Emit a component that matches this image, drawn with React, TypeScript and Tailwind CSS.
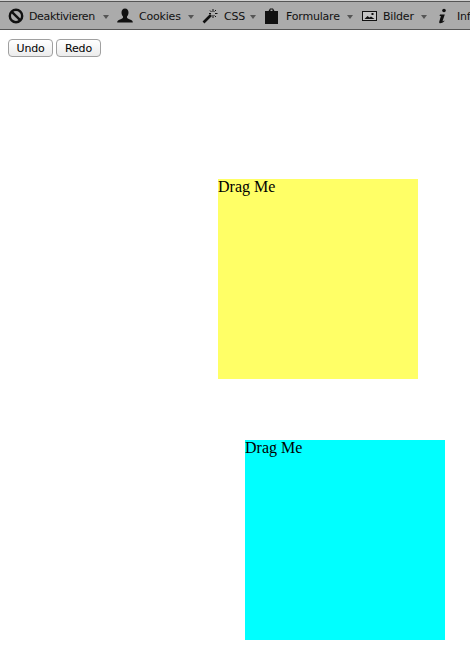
import type { ReactNode } from "react";

function Ban() {
  return (
    <svg width="16" height="16" viewBox="0 0 16 16" fill="none" stroke="#111" strokeWidth="2.4">
      <circle cx="8" cy="8" r="6.200" />
      <line x1="3.800" y1="3.800" x2="12.200" y2="12.200" />
    </svg>
  );
}

function Person() {
  return (
    <svg width="16" height="16" viewBox="0 0 16 16" fill="#111">
      <path d="M8 .5c2.300 0 3.500 1.700 3.500 4 0 1.700-.6 3.100-1.500 3.900v1.100c0 .9 1.300 1.300 3 1.900 1.500.5 2.800 1.100 2.800 3.100H.2c0-2 1.300-2.600 2.800-3.100 1.700-.6 3-1 3-1.900V8.400C5.100 7.600 4.500 6.200 4.500 4.500c0-2.300 1.200-4 3.500-4z" />
    </svg>
  );
}

function Wand() {
  return (
    <svg width="16" height="16" viewBox="0 0 16 16" fill="none" stroke="#111">
      <line x1="1.500" y1="14.500" x2="9" y2="7" strokeWidth="2.600" />
      <path d="M11 1v3M11 7v3M7 5.500h2M13 5.500h2.500M8 2.500l1.500 1.500M14 2l-1.500 1.500M14 9l-1.500-1.500" strokeWidth="1" />
    </svg>
  );
}

function Clipboard() {
  return (
    <svg width="15" height="16" viewBox="0 0 15 16" fill="#111">
      <path d="M1 3h3.500L6 .5h3L10.500 3H14v13H1z" />
      <rect x="6.500" y="1.500" width="2" height="1.500" fill="#aaa" />
    </svg>
  );
}

function Picture() {
  return (
    <svg width="15" height="16" viewBox="0 0 15 16" fill="none">
      <rect x="0.500" y="3.500" width="14" height="9" stroke="#111" fill="#c4c4c4" />
      <path d="M2.500 11l3-3 2 1.500 1.500-1 3.500 2.500z" fill="#111" />
      <rect x="9.500" y="5" width="2" height="2" fill="#111" />
    </svg>
  );
}

function Info() {
  return (
    <svg width="9" height="16" viewBox="0 0 9 16" fill="#111">
      <circle cx="6" cy="2.500" r="1.800" />
      <path d="M2 6.500h4.800L4.600 13c-.1.500.3.500 1.600-.4l.3.500C5 14.800 3.500 15.300 2.300 15.300c-1 0-1.300-.7-1-1.800l1.600-5.400H1.500z" />
    </svg>
  );
}

function Arrow() {
  return <span className="mt-[2px] h-0 w-0 shrink-0 border-x-[3px] border-t-[4px] border-x-transparent border-t-[#555]" />;
}

function ToolItem({ icon, label, iconClass, labelClass }: { icon: ReactNode; label: string; iconClass: string; labelClass: string }) {
  return (
    <div className="flex shrink-0 items-center">
      <span className={`flex shrink-0 items-center ${iconClass}`}>{icon}</span>
      <span className={`mt-[2px] shrink-0 text-[11px] leading-none text-[#111] ${labelClass}`}>{label}</span>
      <Arrow />
    </div>
  );
}

export default function App() {
  return (
    <div className="relative h-[661px] w-[470px] overflow-hidden bg-white font-['Liberation_Serif',serif]">
      {/* Web developer toolbar */}
      <div className="flex h-[30px] items-center overflow-hidden border-y border-t-[#d0d0d0] border-b-[#555] bg-[#ababab] pb-px shadow-[inset_0_1px_0_#555] font-['DejaVu_Sans',sans-serif]">
        <div className="flex items-center pl-[8px] pt-[2px]">
          <ToolItem icon={<Ban />} label="Deaktivieren" iconClass="ml-0 mr-[5px]" labelClass="w-[74px] tracking-[-0.35px]" />
          <ToolItem icon={<Person />} label="Cookies" iconClass="ml-[8px] mr-[6px]" labelClass="w-[49px] tracking-[-0.2px]" />
          <ToolItem icon={<Wand />} label="CSS" iconClass="ml-[8px] mr-[6px]" labelClass="w-[26px] tracking-[-0.2px]" />
          <ToolItem icon={<Clipboard />} label="Formulare" iconClass="ml-[8px] mr-[7px]" labelClass="w-[61px] tracking-[-0.2px]" />
          <ToolItem icon={<Picture />} label="Bilder" iconClass="ml-[9px] mr-[6px]" labelClass="w-[38px] tracking-[-0.2px]" />
          <div className="flex shrink-0 items-center">
            <span className="ml-[11px] mr-[10px] flex shrink-0 items-center"><Info /></span>
            <span className="mt-[2px] shrink-0 text-[11px] leading-none tracking-[-0.2px] text-[#111]">Inf</span>
          </div>
        </div>
      </div>

      <div className="flex gap-[3px] pl-[8px] pt-[9px] font-['DejaVu_Sans',sans-serif]">
        <button className="h-[18px] w-[45px] rounded-[4px] border border-[#a0a0a0] bg-gradient-to-b from-white to-[#ececec] pt-px text-[11px] leading-none tracking-[-0.2px] text-black">Undo</button>
        <button className="h-[18px] w-[45px] rounded-[4px] border border-[#a0a0a0] bg-gradient-to-b from-white to-[#ececec] pt-px text-[11px] leading-none tracking-[-0.2px] text-black">Redo</button>
      </div>

      {/* draggable boxes sit wherever they were dropped */}
      <div className="absolute left-[218px] top-[179px] h-[200px] w-[200px] bg-[#ffff66] text-[16px] leading-[16px] text-black">Drag Me</div>
      <div className="absolute left-[245px] top-[440px] h-[200px] w-[200px] bg-[#00ffff] text-[16px] leading-[16px] text-black">Drag Me</div>
    </div>
  );
}
